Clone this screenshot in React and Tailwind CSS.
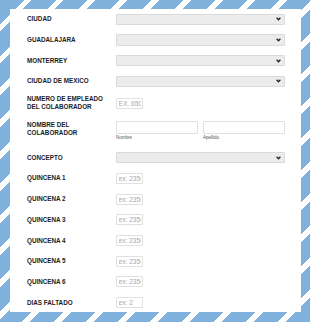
const LABEL = 'w-[106px] shrink-0 pl-[17px] text-[6.3px] font-bold leading-[8px] text-[#1c1c1c]';

const Chevron = () => (
  <svg width="5" height="4" viewBox="0 0 5 4" className="text-[#222]">
    <path d="M0.6 0.8 L2.5 2.8 L4.4 0.8" fill="none" stroke="currentColor" strokeWidth="1.3" />
  </svg>
);

const Select = () => (
  <div className="flex h-[11.5px] w-[169px] items-center justify-end rounded-[1px] border border-[#dadada] bg-[#ececec] pr-[3px]">
    <Chevron />
  </div>
);

const Field = ({ placeholder, className = 'w-[27px] h-[11px]' }) => (
  <input
    readOnly
    placeholder={placeholder}
    className={`${className} rounded-[1px] border border-[#e0e0e0] bg-white px-[1.5px] text-[6.6px] text-[#999] outline-none placeholder:text-[#a8a8a8]`}
  />
);

const SelectRow = ({ label, h = 'h-[20.7px]' }) => (
  <div className={`flex items-center ${h}`}>
    <div className={LABEL}>{label}</div>
    <Select />
  </div>
);

const InputRow = ({ label, placeholder = 'ex: 2350' }) => (
  <div className="flex h-[20.7px] items-center">
    <div className={LABEL}>{label}</div>
    <Field placeholder={placeholder} />
  </div>
);

export default function App() {
  return (
    <div
      className="h-[322px] w-[310px] bg-[repeating-linear-gradient(135deg,#80b1dd_0px,#80b1dd_17px,#fff_17px,#fff_22.6px)] pb-[10px] pl-[10px] pr-[9px] pt-[9px]"
      style={{ fontFamily: '"Liberation Sans", Arial, sans-serif' }}
    >
      <div className="h-full w-full bg-white">
        <SelectRow label="CIUDAD" />
        <SelectRow label="GUADALAJARA" />
        <SelectRow label="MONTERREY" />
        <SelectRow label="CIUDAD DE MEXICO" />

        <div className="flex h-[23.2px] items-center">
          <div className={LABEL}>
            NUMERO DE EMPLEADO
            <br />
            DEL COLABORADOR
          </div>
          <Field placeholder="EX. 6500" />
        </div>

        <div className="flex h-[32.2px] items-start pt-[6.5px]">
          <div className={LABEL}>
            NOMBRE DEL
            <br />
            COLABORADOR
          </div>
          <div className="flex gap-[5px]">
            <div className="flex flex-col">
              <Field className="h-[12.5px] w-[82px]" />
              <span className="mt-[1.5px] text-[4.5px] leading-[6px] text-[#555]">Nombre</span>
            </div>
            <div className="flex flex-col">
              <Field className="h-[12.5px] w-[82px]" />
              <span className="mt-[1.5px] text-[4.5px] leading-[6px] text-[#555]">Apellido</span>
            </div>
          </div>
        </div>

        <SelectRow label="CONCEPTO" h="h-[21px]" />

        {[1, 2, 3, 4, 5, 6].map((n) => (
          <InputRow key={n} label={`QUINCENA ${n}`} />
        ))}
        <InputRow label="DIAS FALTADO" placeholder="ex: 2" />
      </div>
    </div>
  );
}
